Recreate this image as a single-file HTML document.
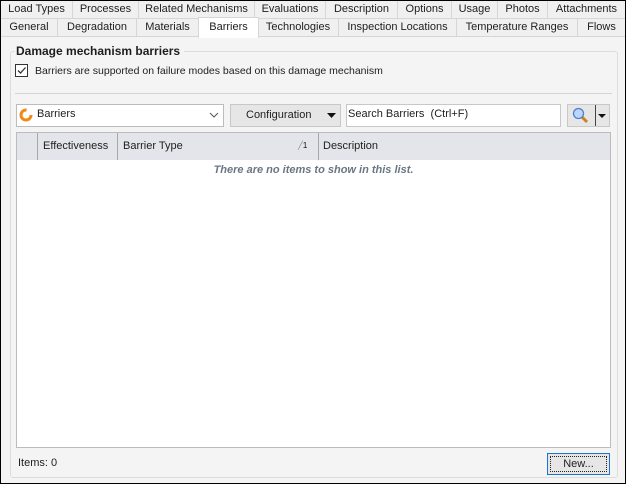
<!DOCTYPE html>
<html><head><meta charset="utf-8"><style>
*{box-sizing:border-box;margin:0;padding:0}
body{width:626px;height:484px;background:#f4f4f4;font-family:"Liberation Sans",Tahoma,sans-serif;font-size:11px;color:#1e1e1e;position:relative;overflow:hidden}
.frame{position:absolute;left:0;top:0;width:626px;height:484px;border:1px solid #000;}
.tab{position:absolute;height:18px;background:#f0f0f0;border-right:1px solid #d6d6d6;border-bottom:1px solid #d6d6d6;text-align:center;line-height:17px;white-space:nowrap;font-size:11px}
.sel{background:#fff;border:1px solid #d6d6d6;border-bottom:none;height:21px;top:17px!important;line-height:19px}
.abs{position:absolute;white-space:nowrap}
</style></head><body>
<div class="frame"></div>
<div class="tab" style="left:1px;top:1px;width:72px">Load Types</div>
<div class="tab" style="left:73px;top:1px;width:66px">Processes</div>
<div class="tab" style="left:139px;top:1px;width:116px">Related Mechanisms</div>
<div class="tab" style="left:255px;top:1px;width:71px">Evaluations</div>
<div class="tab" style="left:326px;top:1px;width:72px">Description</div>
<div class="tab" style="left:398px;top:1px;width:54px">Options</div>
<div class="tab" style="left:452px;top:1px;width:46px">Usage</div>
<div class="tab" style="left:498px;top:1px;width:50px">Photos</div>
<div class="tab" style="left:548px;top:1px;width:77px;border-right:none">Attachments</div>
<div class="tab" style="left:1px;top:19px;width:57px">General</div>
<div class="tab" style="left:58px;top:19px;width:79px">Degradation</div>
<div class="tab" style="left:137px;top:19px;width:62px">Materials</div>
<div class="tab" style="left:258px;top:19px;width:81px">Technologies</div>
<div class="tab" style="left:339px;top:19px;width:118px">Inspection Locations</div>
<div class="tab" style="left:457px;top:19px;width:121px">Temperature Ranges</div>
<div class="tab" style="left:578px;top:19px;width:47px;border-right:none">Flows</div>
<div class="tab sel" style="left:198px;width:61px">Barriers</div>

<div class="abs" style="left:10px;top:51px;width:608px;height:427px;border:1px solid #dcdcdc;border-radius:3px"></div>
<div class="abs" style="left:15px;top:43px;background:#f4f4f4;padding:0 4px 0 1px;font-weight:bold;font-size:12px;line-height:16px">Damage mechanism barriers</div>
<div class="abs" style="left:15px;top:64px;width:13px;height:13px;border:1px solid #333;background:#fff">
<svg width="11" height="11" style="position:absolute;left:0;top:0"><path d="M2 5.5 L4.5 8 L9.5 2.5" stroke="#333" stroke-width="1.3" fill="none"/></svg></div>
<div class="abs" style="left:35px;top:64px;font-size:10.5px;line-height:14px">Barriers are supported on failure modes based on this damage mechanism</div>
<div class="abs" style="left:15px;top:93px;width:597px;height:1px;background:#d4d4d4"></div>

<div class="abs" style="left:16px;top:104px;width:208px;height:23px;border:1px solid #bcbcbc;background:#fff"></div>
<svg class="abs" style="left:19px;top:108px" width="14" height="14"><circle cx="7" cy="7" r="5" stroke="#f08a10" stroke-width="3" fill="none" stroke-dasharray="24 8"/></svg>
<div class="abs" style="left:37px;top:108px">Barriers</div>
<svg class="abs" style="left:209px;top:112px" width="10" height="7"><path d="M1 1 L5 5 L9 1" stroke="#555" fill="none"/></svg>
<div class="abs" style="left:230px;top:104px;width:111px;height:23px;border:1px solid #c8c8c8;background:#e6e6e6"></div>
<div class="abs" style="left:246px;top:109px">Configuration</div>
<svg class="abs" style="left:327px;top:113px" width="9" height="5"><path d="M0 0 H9 L4.5 5Z" fill="#111"/></svg>
<div class="abs" style="left:346px;top:104px;width:215px;height:23px;border:1px solid #c8c8c8;background:#fff;padding:2px 1px;line-height:14px">Search Barriers&nbsp; (Ctrl+F)</div>
<div class="abs" style="left:567px;top:104px;width:43px;height:23px;border:1px solid #c8c8c8;background:#e6e6e6"></div>
<div class="abs" style="left:595px;top:105px;width:1px;height:21px;background:#444"></div>
<svg class="abs" style="left:571px;top:106px" width="20" height="20"><line x1="10" y1="10" x2="16" y2="16" stroke="#d08020" stroke-width="3"/><circle cx="7.5" cy="7.5" r="5" fill="#bcd6ff" stroke="#4f7fd0" stroke-width="1.3"/></svg>
<svg class="abs" style="left:598px;top:114px" width="8" height="4"><path d="M0 0 H8 L4 4Z" fill="#111"/></svg>

<div class="abs" style="left:16px;top:132px;width:595px;height:316px;border:1px solid #bcbcbc;background:#fff"></div>
<div class="abs" style="left:17px;top:133px;width:593px;height:27px;background:#e3e5ea"></div>
<div class="abs" style="left:37px;top:133px;width:1px;height:27px;background:#a8a8a8"></div>
<div class="abs" style="left:117px;top:133px;width:1px;height:27px;background:#a8a8a8"></div>
<div class="abs" style="left:318px;top:133px;width:1px;height:27px;background:#a8a8a8"></div>
<div class="abs" style="left:43px;top:140px">Effectiveness</div>
<div class="abs" style="left:123px;top:140px">Barrier Type</div>
<div class="abs" style="left:298px;top:141px;font-size:8px;color:#888">&#x2571;<span style="color:#111">1</span></div>
<div class="abs" style="left:323px;top:140px">Description</div>
<div class="abs" style="left:17px;top:164px;width:593px;text-align:center;font-style:italic;font-weight:bold;color:#6b7685">There are no items to show in this list.</div>

<div class="abs" style="left:18px;top:457px">Items: 0</div>
<div class="abs" style="left:547px;top:453px;width:63px;height:22px;border:1px solid #1a73d6;background:#e6e6e6"><div style="position:absolute;left:2px;top:2px;right:2px;bottom:2px;border:1px dotted #222;text-align:center;line-height:15px">New...</div></div>
</body></html>
